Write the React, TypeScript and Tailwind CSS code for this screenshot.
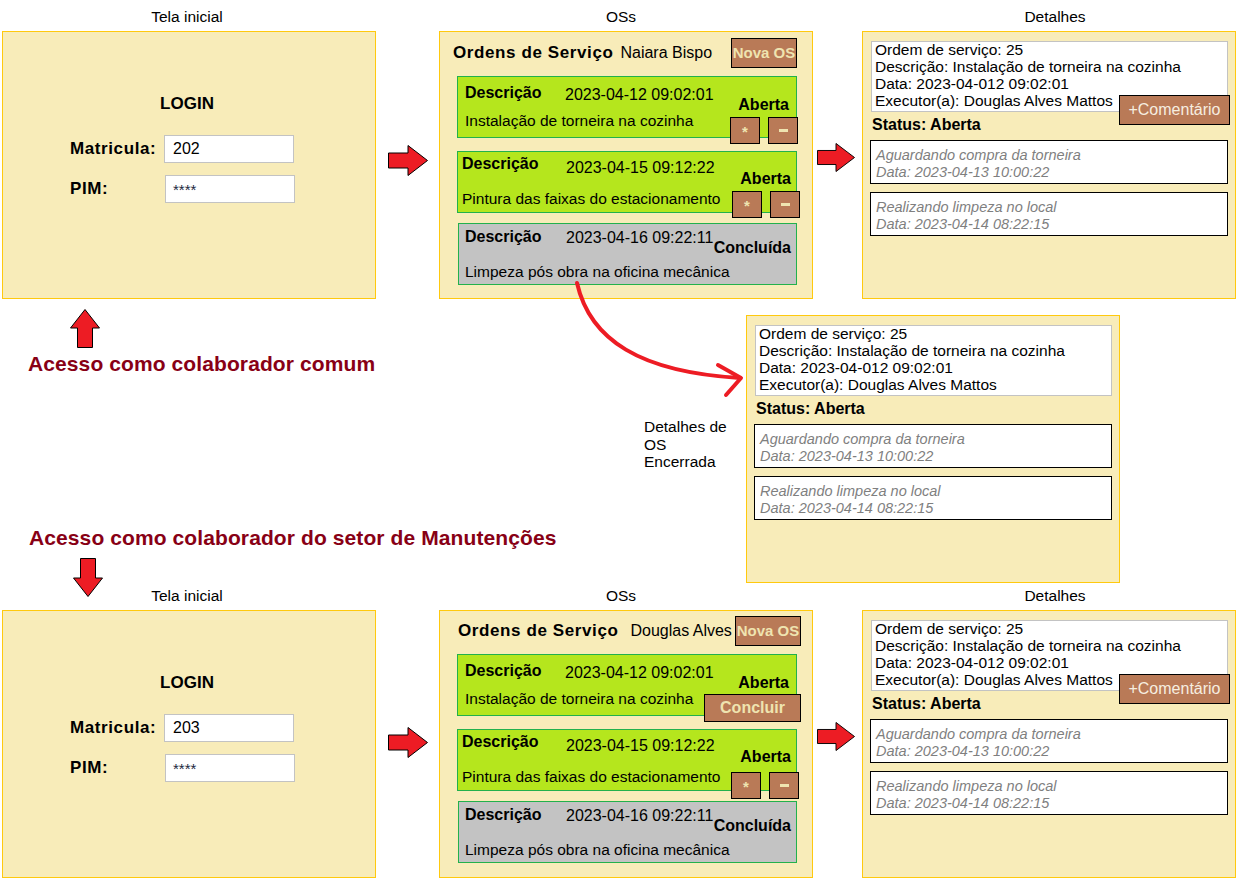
import React from 'react';

const FONT = "font-['Liberation_Sans',Arial,sans-serif]";
const PANEL = 'border border-[#ffc90e] bg-[#f8ecb9]';
const BROWN = 'border border-black bg-[#b97a57]';

function RightArrow({ className }: { className: string }) {
  return (
    <svg className={className} viewBox="0 0 40 31" preserveAspectRatio="none">
      <polygon
        points="0.5,8 20,8 20,0.5 39.5,15.5 20,30.5 20,23 0.5,23"
        fill="#ed1c24"
        stroke="#000"
        strokeWidth="1"
      />
    </svg>
  );
}

function VArrow({ className, down }: { className: string; down?: boolean }) {
  return (
    <svg className={className} viewBox="0 0 30 39">
      <polygon
        points={
          down
            ? '7.5,0.5 22.5,0.5 22.5,20 29.5,20 15,38.5 0.5,20 7.5,20'
            : '15,0.5 29.5,19 22.5,19 22.5,38.5 7.5,38.5 7.5,19 0.5,19'
        }
        fill="#ed1c24"
        stroke="#000"
        strokeWidth="1"
      />
    </svg>
  );
}

function LoginPanel({ matricula }: { matricula: string }) {
  return (
    <div className={`h-[268px] ${PANEL} pt-[62px]`}>
      <div className="pr-[4px] text-center text-[17px] leading-[20px] font-bold">LOGIN</div>
      <div className="mt-[21px] flex items-center pl-[67px]">
        <span className="w-[94px] text-[17px] leading-[20px] font-bold tracking-[0.6px]">Matricula:</span>
        <div className="w-[130px] h-[28px] border border-[#c3c3c3] bg-white flex items-center pl-[8px] text-[16px]">
          {matricula}
        </div>
      </div>
      <div className="mt-[12px] flex items-center pl-[67px]">
        <span className="w-[95px] text-[17px] leading-[20px] font-bold tracking-[0.6px]">PIM:</span>
        <div className="w-[130px] h-[28px] border border-[#c3c3c3] bg-white flex items-center pl-[7px] pt-[3px] text-[15px] text-[#1c2840]">
          ****
        </div>
      </div>
    </div>
  );
}

function SmallButtons({ className }: { className: string }) {
  return (
    <div className={`absolute flex gap-[8px] ${className}`}>
      <div className={`w-[30px] h-[27px] ${BROWN} flex justify-center`}>
        <span className="pt-[6px] text-[15px] leading-none font-bold text-[#efe4b0]">*</span>
      </div>
      <div className={`w-[30px] h-[27px] ${BROWN} flex items-center justify-center`}>
        <span className="w-[9px] h-[3px] bg-[#efe4b0]" />
      </div>
    </div>
  );
}

type CardProps = {
  box: string;
  pad: string;
  titleW: string;
  dateMt: string;
  descMt: string;
  date: string;
  desc: string;
  status: string;
  statusPos: string;
  children?: React.ReactNode;
};

function Card(p: CardProps) {
  return (
    <div className={`relative h-[62px] border border-[#22b14c] ${p.box} ${p.pad}`}>
      <div className="flex items-start h-[18px]">
        <span className={`${p.titleW} shrink-0 text-[16px] leading-[18px] font-bold`}>Descrição</span>
        <span className={`${p.dateMt} text-[16px] leading-[18px] whitespace-nowrap`}>{p.date}</span>
      </div>
      <div className={`${p.descMt} text-[15.5px] leading-[18px] whitespace-nowrap`}>{p.desc}</div>
      <span className={`absolute ${p.statusPos} text-[16px] leading-[18px] font-bold`}>{p.status}</span>
      {p.children}
    </div>
  );
}

function OSPanel({
  name,
  header,
  nameMl,
  btn,
  maintenance,
}: {
  name: string;
  header: string;
  nameMl: string;
  btn: string;
  maintenance?: boolean;
}) {
  return (
    <div className={`h-[268px] ${PANEL}`}>
      <div className={`flex items-center h-[30px] ${header}`}>
        <span className="text-[17px] leading-[20px] font-bold tracking-[0.6px]">Ordens de Serviço</span>
        <span className={`${nameMl} text-[16px] leading-[18px]`}>{name}</span>
        <div
          className={`ml-auto ${btn} w-[66px] h-[30px] ${BROWN} flex items-center justify-center text-[15px] font-bold text-[#efe4b0]`}
        >
          Nova OS
        </div>
      </div>

      <div className="mt-[8px] ml-[17px] w-[340px]">
        <Card
          box="bg-[#b5e61d]"
          pad="pt-[7px] pl-[7px]"
          titleW="w-[100px]"
          dateMt="mt-[2px]"
          descMt="mt-[10px]"
          date="2023-04-12 09:02:01"
          desc="Instalação de torneira na cozinha"
          status="Aberta"
          statusPos="right-[7px] top-[19px]"
        >
          {maintenance ? (
            <div
              className={`absolute left-[246px] top-[39px] w-[97px] h-[28px] ${BROWN} flex items-center justify-center text-[16px] font-bold text-[#efe4b0]`}
            >
              Concluir
            </div>
          ) : (
            <SmallButtons className="left-[272px] top-[40px]" />
          )}
        </Card>
      </div>

      <div className="mt-[13px] ml-[17px] w-[340px]">
        <Card
          box="bg-[#b5e61d]"
          pad="pt-[3px] pl-[4px]"
          titleW="w-[104px]"
          dateMt="mt-[4px]"
          descMt="mt-[17px]"
          date="2023-04-15 09:12:22"
          desc="Pintura das faixas do estacionamento"
          status="Aberta"
          statusPos="right-[5px] top-[18px]"
        >
          <SmallButtons className={maintenance ? 'left-[273px] top-[42px]' : 'left-[274px] top-[39px]'} />
        </Card>
      </div>

      <div className="mt-[10px] ml-[18px] w-[339px]">
        <Card
          box="bg-[#c3c3c3]"
          pad="pt-[4px] pl-[6px]"
          titleW="w-[101px]"
          dateMt="mt-[1px]"
          descMt="mt-[17px]"
          date="2023-04-16 09:22:11"
          desc="Limpeza pós obra na oficina mecânica"
          status="Concluída"
          statusPos="right-[5px] top-[15px]"
        />
      </div>
    </div>
  );
}

function Comment({ className, text, date }: { className: string; text: string; date: string }) {
  return (
    <div
      className={`${className} ml-[7px] w-[358px] h-[44px] border border-black bg-white pl-[5px] pt-[6px] italic text-[14.5px] leading-[17px] text-[#7f7f7f]`}
    >
      <div>{text}</div>
      <div>{date}</div>
    </div>
  );
}

function DetailsPanel({ withButton }: { withButton: boolean }) {
  return (
    <div className={`relative h-[268px] ${PANEL} pt-[9px]`}>
      <div className="ml-[8px] w-[357px] h-[71px] border border-[#c3c3c3] bg-white pl-[3px] text-[15.5px] leading-[17px] whitespace-nowrap">
        <div className="-mt-[1px]">Ordem de serviço: 25</div>
        <div>Descrição: Instalação de torneira na cozinha</div>
        <div>Data: 2023-04-012 09:02:01</div>
        <div>Executor(a): Douglas Alves Mattos</div>
      </div>
      {withButton && (
        <div
          className={`absolute left-[256px] top-[63px] w-[111px] h-[30px] ${BROWN} flex items-center justify-center text-[16px] text-[#f6eee0]`}
        >
          +Comentário
        </div>
      )}
      <div className="mt-[4px] ml-[9px] text-[16px] leading-[18px] font-bold">Status: Aberta</div>
      <Comment className="mt-[6px]" text="Aguardando compra da torneira" date="Data: 2023-04-13 10:00:22" />
      <Comment className="mt-[8px]" text="Realizando limpeza no local" date="Data: 2023-04-14 08:22:15" />
    </div>
  );
}

function Label({ text, className }: { text: string; className: string }) {
  return <div className={`h-[31px] pt-[8px] text-center text-[15.5px] leading-[18px] ${className}`}>{text}</div>;
}

function FlowRow({
  matricula,
  name,
  header,
  nameMl,
  btn,
  arrow1,
  arrow2,
  maintenance,
}: {
  matricula: string;
  name: string;
  header: string;
  nameMl: string;
  btn: string;
  arrow1: string;
  arrow2: string;
  maintenance?: boolean;
}) {
  return (
    <div className="flex h-[299px] shrink-0">
      <div className="ml-[2px] w-[374px]">
        <Label text="Tela inicial" className="pr-[4px]" />
        <LoginPanel matricula={matricula} />
      </div>
      <div className="w-[63px]">
        <RightArrow className={`ml-[12px] w-[40px] h-[31px] ${arrow1}`} />
      </div>
      <div className="w-[374px]">
        <Label text="OSs" className="pr-[10px]" />
        <OSPanel name={name} header={header} nameMl={nameMl} btn={btn} maintenance={maintenance} />
      </div>
      <div className="w-[49px]">
        <RightArrow className={`ml-[4px] w-[38px] h-[29px] ${arrow2}`} />
      </div>
      <div className="w-[374px]">
        <Label text="Detalhes" className="pl-[12px]" />
        <DetailsPanel withButton />
      </div>
    </div>
  );
}

export default function App() {
  return (
    <div className={`relative w-[1239px] h-[885px] bg-white text-black overflow-hidden flex flex-col ${FONT}`}>
      <FlowRow
        matricula="202"
        name="Naiara Bispo"
        header="mt-[6px] pl-[13px]"
        nameMl="ml-[7px]"
        btn="mr-[15px]"
        arrow1="mt-[145px]"
        arrow2="mt-[143px]"
      />

      {/* middle: access notes + closed OS details */}
      <div className="flex h-[280px] shrink-0">
        <div className="w-[644px] shrink-0">
          <VArrow className="block ml-[70px] mt-[10px] w-[30px] h-[39px]" />
          <div className="ml-[28px] mt-[4px] text-[21px] leading-[24px] font-bold tracking-[0.1px] text-[#880015]">
            Acesso como colaborador comum
          </div>
          <div className="ml-[29px] mt-[150px] text-[21px] leading-[24px] font-bold tracking-[0.1px] text-[#880015] whitespace-nowrap">
            Acesso como colaborador do setor de Manutenções
          </div>
          <VArrow down className="block ml-[73px] mt-[8px] w-[30px] h-[39px]" />
        </div>
        <div className="w-[102px] shrink-0 pt-[119px]">
          <div className="w-[90px] text-[15.5px] leading-[17.5px]">Detalhes de OS Encerrada</div>
        </div>
        <div className="w-[374px] shrink-0 mt-[16px]">
          <DetailsPanel withButton={false} />
        </div>
      </div>

      <FlowRow
        matricula="203"
        name="Douglas Alves"
        header="mt-[5px] pl-[18px]"
        nameMl="ml-[12px]"
        btn="mr-[11px]"
        arrow1="mt-[148px]"
        arrow2="mt-[143px]"
        maintenance
      />

      <svg
        className="absolute left-[560px] top-[270px] w-[200px] h-[140px] pointer-events-none"
        viewBox="560 270 200 140"
      >
        <path d="M577 283 C590 340 640 372 740 378" stroke="#ed1c24" strokeWidth="4" fill="none" strokeLinecap="round" />
        <path
          d="M718 365 L741 378 L726 395"
          stroke="#ed1c24"
          strokeWidth="4"
          fill="none"
          strokeLinecap="round"
          strokeLinejoin="round"
        />
      </svg>
    </div>
  );
}
